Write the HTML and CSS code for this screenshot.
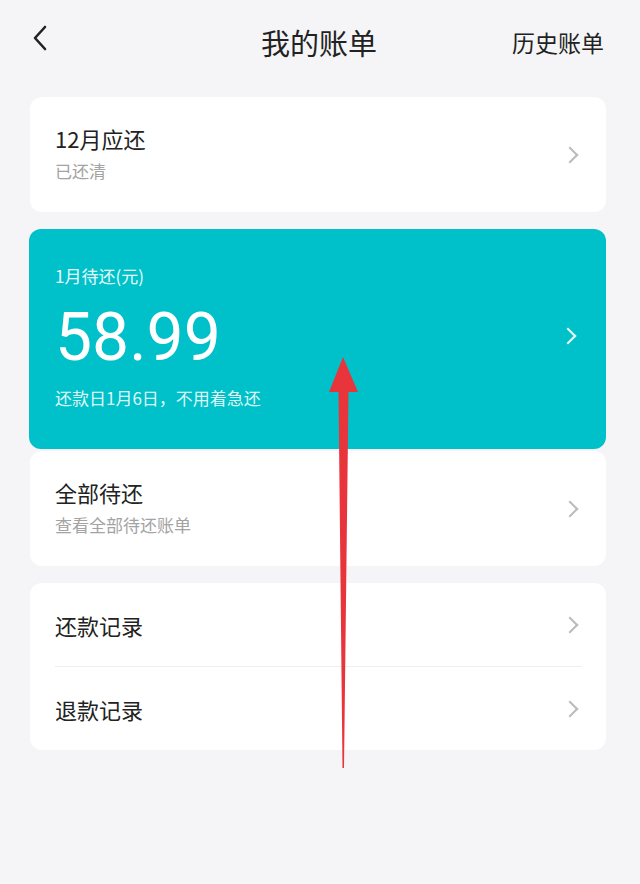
FILE: index.html
```html
<!DOCTYPE html>
<html lang="zh-CN">
<head>
    <meta charset="UTF-8">
    <meta name="viewport" content="width=device-width, initial-scale=1.0">
    <title>我的账单</title>
    <link rel="stylesheet" href="styles.css">
</head>
<body>
    <div class="page">
        <div class="header">
            <div class="back">
                <svg width="16" height="26" viewBox="0 0 16 26"><path d="M13 2 L3 13 L13 24" fill="none" stroke="#222" stroke-width="2.6" stroke-linecap="round" stroke-linejoin="round"/></svg>
            </div>
            <div class="title">我的账单</div>
            <div class="history">历史账单</div>
        </div>

        <div class="card item">
            <div class="text">
                <div class="main">12月应还</div>
                <div class="sub">已还清</div>
            </div>
            <span class="chevron"></span>
        </div>

        <div class="bill">
            <div class="text">
                <div class="label">1月待还(元)</div>
                <div class="amount">58.99</div>
                <div class="note">还款日1月6日，不用着急还</div>
            </div>
            <span class="chevron light"></span>
        </div>

        <div class="card item">
            <div class="text">
                <div class="main">全部待还</div>
                <div class="sub">查看全部待还账单</div>
            </div>
            <span class="chevron"></span>
        </div>

        <div class="card list">
            <div class="row">
                <div class="main">还款记录</div>
                <span class="chevron"></span>
            </div>
            <div class="row">
                <div class="main">退款记录</div>
                <span class="chevron"></span>
            </div>
        </div>

        <svg class="arrow" width="640" height="884" viewBox="0 0 640 884">
            <polygon points="343,357 358,392 348.5,392 344,768 342.5,768 338.5,392 329,392" fill="#e8353b"/>
        </svg>
    </div>
</body>
</html>
```

FILE: styles.css
```css
body {
    margin: 0;
    padding: 0;
    background-color: #f5f5f7;
    font-family: "Noto Sans CJK SC", "Noto Sans", sans-serif;
    color: #222;
}

.page {
    position: relative;
    width: 640px;
    height: 884px;
    padding: 0 34px 0 30px;
    box-sizing: border-box;
    overflow: hidden;
}

.header {
    display: flex;
    align-items: center;
    justify-content: space-between;
    height: 84px;
    margin: 0 -28px 0 -30px;
    padding: 0 36px 0 32px;
}

.back {
    width: 90px;
    display: flex;
    align-items: center;
    margin-top: -8px;
}

.title {
    font-size: 29px;
    color: #222;
    margin-left: 4px;
}

.history {
    width: 92px;
    font-size: 23px;
    color: #222;
    text-align: right;
    white-space: nowrap;
    margin-right: -6px;
}

.card {
    background-color: #fff;
    border-radius: 12px;
}

.item {
    display: flex;
    align-items: center;
    justify-content: space-between;
    height: 115px;
    padding: 0 30px 0 25px;
    margin-top: 13px;
}

.item .text {
    margin-top: -4px;
}

.main {
    font-size: 22px;
    line-height: 32px;
    color: #222;
}

.sub {
    font-size: 17px;
    line-height: 24px;
    margin-top: 5px;
    color: #a3a3a3;
}

.bill {
    display: flex;
    align-items: center;
    justify-content: space-between;
    height: 220px;
    margin-top: 17px;
    margin-left: -1px;
    padding: 0 32px 0 26px;
    background-color: #00c1c9;
    border-radius: 12px;
    color: #fff;
}

.bill .text {
    margin-top: -4px;
}

.bill + .card {
    margin-top: 2px;
}

.label {
    font-size: 17px;
    line-height: 24px;
    color: #e6fbfc;
}

.amount {
    font-family: Roboto, "Noto Sans", sans-serif;
    font-size: 66px;
    line-height: 80px;
    margin: 10px 0 8px;
    color: #fff;
}

.note {
    font-size: 17px;
    line-height: 24px;
    color: #dff8f9;
}

.chevron {
    width: 10px;
    height: 10px;
    border-top: 2px solid #bbb;
    border-right: 2px solid #bbb;
    transform: rotate(45deg);
    flex-shrink: 0;
}

.chevron.light {
    border-color: #e8fbfc;
    margin-top: -6px;
}

.list {
    margin-top: 17px;
    padding: 0 24px 0 25px;
}

.row {
    display: flex;
    align-items: center;
    justify-content: space-between;
    height: 83px;
    padding-right: 6px;
}

.row + .row {
    border-top: 1px solid #eee;
}

.arrow {
    position: absolute;
    left: 0;
    top: 0;
    pointer-events: none;
}
```
